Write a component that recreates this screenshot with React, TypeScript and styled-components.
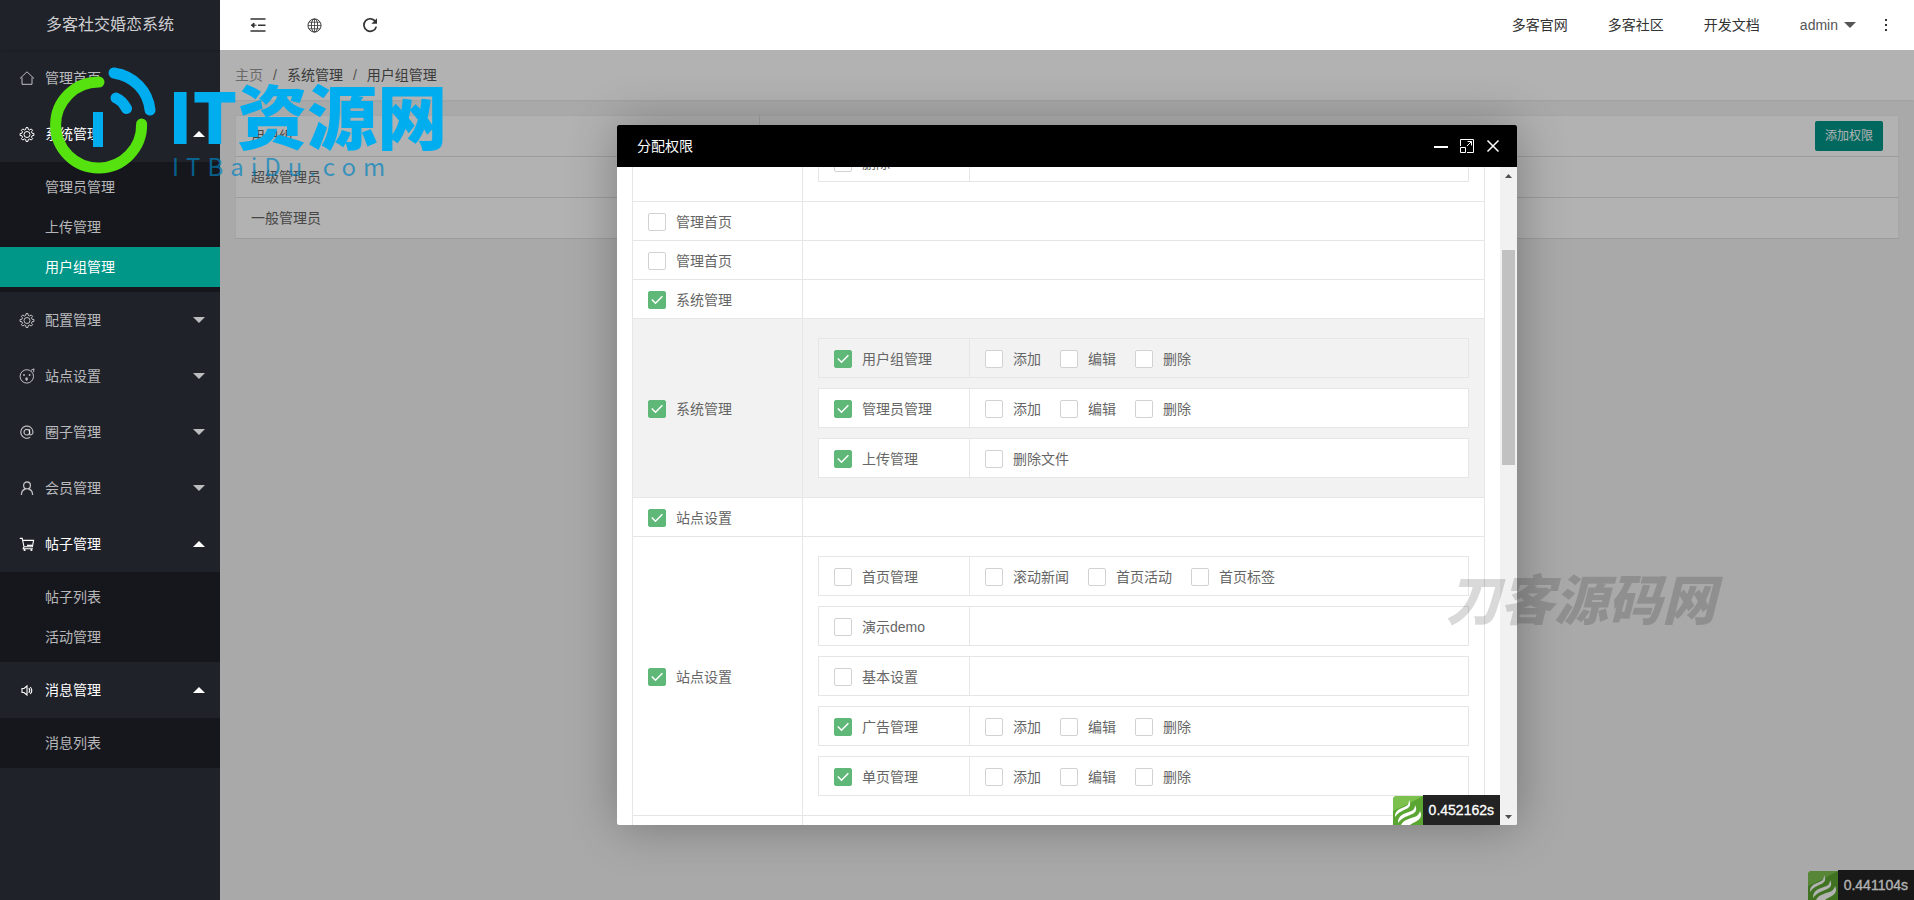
import React from "react";
import styled, { createGlobalStyle } from "styled-components";

const GlobalStyle = createGlobalStyle`
  * { box-sizing: border-box; }
  body {
    margin: 0;
    font: 14px/24px "Liberation Sans", "Noto Sans CJK SC", sans-serif;
    color: #333;
  }
  button, input { font: inherit; }
  ul, ol, nav { margin: 0; padding: 0; list-style: none; }
  a { color: inherit; text-decoration: none; }
`;

/* ---------- shell ---------- */

const Shell = styled.div`
  position: relative;
  display: flex;
  min-height: 100vh;
  overflow: hidden;
`;

const Sidebar = styled.aside`
  flex: 0 0 220px;
  background: #20222a;
  color: rgba(255, 255, 255, 0.7);
`;

const Brand = styled.h1`
  margin: 0;
  height: 50px;
  font-size: 16px;
  font-weight: 400;
  line-height: 50px;
  text-align: center;
  color: rgba(255, 255, 255, 0.8);
  box-shadow: 0 1px 2px rgba(0, 0, 0, 0.15);
`;

const MenuButton = styled.button<{ $open?: boolean }>`
  display: flex;
  align-items: center;
  gap: 10px;
  width: 100%;
  height: 56px;
  padding: 0 15px 0 19px;
  border: 0;
  background: none;
  text-align: left;
  color: ${(p) => (p.$open ? "#fff" : "rgba(255, 255, 255, 0.7)")};
`;

const MenuText = styled.span`
  flex: 1;
`;

const SubMenu = styled.ul`
  && { padding: 5px 0; }
  background: rgba(0, 0, 0, 0.3);
`;

const SubLink = styled.a<{ $active?: boolean }>`
  display: block;
  padding-left: 45px;
  line-height: 40px;
  background: ${(p) => (p.$active ? "#009688" : "none")};
  color: ${(p) => (p.$active ? "#fff" : "inherit")};
`;

const Caret = styled.i<{ $up?: boolean }>`
  width: 0;
  height: 0;
  border: 6px solid transparent;
  ${(p) =>
    p.$up
      ? "border-top-width: 0; border-bottom-color: currentColor;"
      : "border-bottom-width: 0; border-top-color: currentColor;"}
`;

const Main = styled.div`
  flex: 1;
  min-width: 0;
  display: flex;
  flex-direction: column;
`;

const Header = styled.header`
  display: flex;
  justify-content: space-between;
  align-items: center;
  height: 50px;
  padding-left: 10px;
  background: #fff;
`;

const Tools = styled.div`
  display: flex;
`;

const ToolButton = styled.button`
  display: flex;
  justify-content: center;
  align-items: center;
  width: 56px;
  height: 50px;
  padding: 0;
  border: 0;
  background: none;
  color: #333;
`;

const TopNav = styled.nav`
  display: flex;
  align-items: center;
`;

const TopLink = styled.a`
  padding: 0 20px;
`;

const UserLink = styled.a`
  display: flex;
  align-items: center;
  gap: 6px;
  padding: 0 2px 0 20px;
  color: #555;
`;

/* ---------- page behind the dialog ---------- */

const Frame = styled.main`
  position: relative;
  flex: 1;
  background: #f2f2f2;
`;

const Crumbs = styled.ol`
  display: flex;
  align-items: center;
  height: 50px;
  && { padding: 0 15px; }
  background: #fff;
  color: #666;
  box-shadow: 0 1px 2px rgba(0, 0, 0, 0.05);
`;

const Crumb = styled.li<{ $muted?: boolean }>`
  color: ${(p) => (p.$muted ? "#999" : "#555")};
  &:not(:first-child)::before {
    content: "/";
    padding: 0 10px;
    color: #777;
  }
`;

const GroupTable = styled.table`
  width: calc(100% - 30px);
  margin: 15px;
  border-collapse: collapse;
  background: #fff;
  border: 1px solid #eee;
  color: #666;
  tr { height: 41px; border-bottom: 1px solid #e0e0e0; }
  th, td { padding: 0 15px; text-align: left; font-weight: 400; }
  th:first-child, td:first-child { width: 524px; border-right: 1px solid #e6e6e6; }
  th:last-child { text-align: right; }
`;

const AddButton = styled.button`
  height: 30px;
  padding: 0 10px;
  border: 0;
  border-radius: 2px;
  background: #009688;
  color: #fff;
  font-size: 12px;
  line-height: 30px;
  vertical-align: middle;
`;

const Timer = styled.div`
  position: absolute;
  right: 0;
  bottom: 0;
  display: flex;
  align-items: flex-end;
  height: 30px;
`;

const TimerText = styled.span`
  padding: 0 6px;
  background: #232323;
  color: #fff;
  line-height: 30px;
  -webkit-text-stroke: 0.3px #fff;
`;

/* ---------- dialog ---------- */

const Shade = styled.div`
  position: absolute;
  inset: 0;
  display: flex;
  justify-content: center;
  align-items: center;
  background: rgba(0, 0, 0, 0.3);
`;

const Dialog = styled.section`
  display: flex;
  flex-direction: column;
  width: 900px;
  height: 700px;
  max-width: 100%;
  max-height: 100%;
  border-radius: 2px;
  overflow: hidden;
  background: #fff;
  box-shadow: 1px 1px 50px rgba(0, 0, 0, 0.3);
`;

const DialogHead = styled.header`
  display: flex;
  justify-content: space-between;
  align-items: center;
  flex: 0 0 42px;
  padding: 0 16px 0 20px;
  background: #000;
  color: #fff;
`;

const DialogTitle = styled.h2`
  margin: 0;
  font-size: 14px;
  font-weight: 400;
`;

const WindowButtons = styled.div`
  display: flex;
  gap: 10px;
`;

const WindowButton = styled.button`
  display: flex;
  width: 16px;
  height: 16px;
  padding: 0;
  border: 0;
  background: none;
  color: #fff;
`;

const DialogBody = styled.div`
  flex: 1;
  min-height: 0;
  display: flex;
`;

const Viewport = styled.div`
  position: relative;
  flex: 1;
  display: flex;
  flex-direction: column;
  padding: 0 15px;
  overflow: hidden;
`;

/* The list is scrolled, so its first visible group starts above the edge. */
const PermTable = styled.table`
  width: 100%;
  margin-top: -45px;
  table-layout: fixed;
  border-collapse: collapse;
  color: #666;
`;

const PermRow = styled.tr<{ $hover?: boolean }>`
  background: ${(p) => (p.$hover ? "#f2f2f2" : "#fff")};
  height: 39px;
`;

const PermCell = styled.td<{ $name?: boolean }>`
  width: ${(p) => (p.$name ? "170px" : "auto")};
  padding: ${(p) => (p.$name ? "2px 15px 0" : "0 15px")};
  border: 1px solid #e6e6e6;
`;

const InnerList = styled.div`
  display: flex;
  flex-direction: column;
  gap: 10px;
  padding: 19px 0;
`;

const InnerTable = styled.table<{ $hover?: boolean }>`
  width: 100%;
  table-layout: fixed;
  border-collapse: separate;
  border-spacing: 0;
  border: 1px solid #e6e6e6;
  background: ${(p) => (p.$hover ? "#f2f2f2" : "#fff")};
  td { height: 38px; padding: 2px 15px 0; }
  td:first-child { width: 151px; border-right: 1px solid #e6e6e6; }
`;

const CheckGroup = styled.div`
  display: flex;
  gap: 19px;
`;

const CheckLabel = styled.label`
  display: flex;
  align-items: center;
  gap: 10px;
`;

const CheckBox = styled.span`
  display: grid;
  place-items: center;
  > * { grid-area: 1 / 1; }
`;

const CheckInput = styled.input`
  appearance: none;
  width: 18px;
  height: 18px;
  margin: 0;
  border: 1px solid #d2d2d2;
  border-radius: 2px;
  background: #fff;
  &:checked { border-color: #5fb878; background: #5fb878; }
  & + svg { visibility: hidden; pointer-events: none; }
  &:checked + svg { visibility: visible; }
`;

const ScrollBar = styled.div`
  display: flex;
  flex-direction: column;
  align-items: center;
  flex: 0 0 17px;
  background: #f1f1f1;
`;

const ScrollArrow = styled.span`
  display: flex;
  justify-content: center;
  align-items: center;
  height: 17px;
`;

const ScrollTrack = styled.div`
  flex: 1;
  width: 13px;
  padding-top: 66px;
`;

const ScrollThumb = styled.div`
  height: 215px;
  background: #c1c1c1;
`;

/* ---------- watermarks ---------- */

const SiteMark = styled.div`
  position: absolute;
  left: 50px;
  top: 65px;
  display: flex;
  gap: 8px;
  pointer-events: none;
`;

const SiteMarkText = styled.div`
  display: flex;
  flex-direction: column;
  font-family: "Noto Sans CJK SC", sans-serif;
  white-space: nowrap;
`;

const SiteName = styled.span`
  margin-top: 14px;
  color: #00adef;
  font-size: 70px;
  font-weight: 900;
  line-height: 70px;
`;

const SiteDomain = styled.span`
  padding-left: 4px;
  color: rgba(0, 130, 190, 0.7);
  font-size: 24px;
  letter-spacing: 7px;
  line-height: 34px;
`;

const SourceMark = styled.div`
  position: absolute;
  right: 198px;
  top: 569px;
  color: rgba(0, 0, 0, 0.15);
  font: italic 900 54px/56px "Noto Sans CJK SC", sans-serif;
  pointer-events: none;
`;

/* ---------- icons ---------- */

const Icon = ({ children, size = 16 }: { children: React.ReactNode; size?: number }) => (
  <svg width={size} height={size} viewBox="0 0 16 16" fill="none" stroke="currentColor" strokeWidth="1" aria-hidden="true">
    {children}
  </svg>
);

/* Eight-tooth gear outline: four points per tooth, two on each radius. */
const gearPoints = Array.from({ length: 32 }, (_, i) => {
  const tooth = Math.floor(i / 4);
  const step = [-14, -8, 8, 14][i % 4];
  const radius = i % 4 === 1 || i % 4 === 2 ? 7 : 5.2;
  const angle = ((tooth * 45 + step) * Math.PI) / 180;
  return `${(8 + radius * Math.cos(angle)).toFixed(2)},${(8.5 + radius * Math.sin(angle)).toFixed(2)}`;
}).join(" ");

const HomeIcon = () => (
  <Icon><path d="M1 8.500 8 1.800l7 6.700M3 7.500v6.800h10V7.500" /></Icon>
);
const GearIcon = () => (
  <Icon>
    <polygon points={gearPoints} strokeLinejoin="round" />
    <circle cx="8" cy="8.500" r="3" />
  </Icon>
);
const FaceIcon = () => (
  <Icon>
    <circle cx="7.800" cy="8.400" r="6.700" />
    <path d="M12 2.400 15 .8l-.4 3.400" />
    <circle cx="5" cy="7" r=".9" fill="currentColor" stroke="none" />
    <circle cx="10.600" cy="7" r=".9" fill="currentColor" stroke="none" />
    <ellipse cx="7.600" cy="11" rx="1.300" ry="1.800" fill="currentColor" stroke="none" />
  </Icon>
);
const AtIcon = () => (
  <Icon>
    <circle cx="7.800" cy="8.200" r="2.800" strokeWidth="1.200" />
    <path d="M10.600 5.200v4.400c0 2 3.400 1.600 3.400-1.600a6.100 6.100 0 1 0-2.800 5.300" strokeWidth="1.200" />
  </Icon>
);
const UserIcon = () => (
  <Icon>
    <circle cx="8" cy="5.400" r="3.400" strokeWidth="1.300" />
    <path d="M2.400 15c0-3.400 1.600-5.400 4-6M13.600 15c0-3.400-1.600-5.400-4-6" strokeWidth="1.300" />
  </Icon>
);
const CartIcon = () => (
  <Icon>
    <path d="M.8 2.400h2.400L5 10.800h8.400l1.200-6.400H3.700M5 10.800l-.8 2h9.600" strokeWidth="1.100" />
    <circle cx="5.600" cy="14" r="1.100" fill="currentColor" stroke="none" />
    <circle cx="12.400" cy="14" r="1.100" fill="currentColor" stroke="none" />
    <path d="M8 9.400h5" strokeWidth="1.400" />
  </Icon>
);
const SoundIcon = () => (
  <Icon>
    <path d="M3 6.500v4h2l3 2.500V4L5 6.500z" strokeWidth="1.100" />
    <path d="M9.800 6.200c1 1.200 1 3.400 0 4.600M11.300 5c1.700 2 1.700 5 0 7" strokeWidth="1.100" />
  </Icon>
);
const ShrinkIcon = () => (
  <Icon>
    <path d="M.5 2h15M8 8.200h7.500M.5 14h15" strokeWidth="1.400" />
    <path d="M1.200 8.200 4 6v4.400zM4 8.200h2.500" fill="currentColor" strokeWidth="1" />
  </Icon>
);
const GlobeIcon = () => (
  <Icon size={15}>
    <circle cx="8" cy="8" r="7" />
    <ellipse cx="8" cy="8" rx="3.400" ry="7" />
    <path d="M1 8h14M8 1v14M2.200 4.500h11.600M2.200 11.500h11.600" strokeWidth=".8" />
  </Icon>
);
const RefreshIcon = () => (
  <Icon>
    <path d="M13.600 4.800A6.300 6.300 0 1 0 14.300 9.600" strokeWidth="1.700" />
    <path d="M15 1.200v5.600H9.400z" fill="currentColor" stroke="none" />
  </Icon>
);
const MoreIcon = () => (
  <Icon>
    <path d="M7 2h2v2H7zM7 7h2v2H7zM7 12h2v2H7z" fill="currentColor" stroke="none" />
  </Icon>
);
const MinIcon = () => <Icon><path d="M1 9h14" strokeWidth="2" /></Icon>;
const MaxIcon = () => (
  <Icon>
    <path d="M1.500 8V1.500h13v13H8M1.500 9.500h5v5h-5zM8 8l4.500-4.500M8.500 3.500h4v4" />
  </Icon>
);
const CloseIcon = () => <Icon><path d="m2.500 2.500 11 11m0-11-11 11" strokeWidth="1.500" /></Icon>;

const FlameIcon = () => (
  <svg width="30" height="29" viewBox="0 0 30 29" aria-hidden="true">
    <path d="M0 29V4a4 4 0 0 1 4-4h26v29z" fill="#5ba532" />
    <path d="M0 15V4a4 4 0 0 1 4-4h26L13 9z" fill="#7cc04e" />
    <g fill="#fff">
      <path d="M16 4c3 6 0 8-5 10-4 2-6 3-9 7 0-5 2-7 7-9s7-3 7-8z" />
      <path d="M22 9c3 6 0 8-5 10-5 2-8 3-12 8 0-6 3-8 8-10 6-2 9-3 9-8z" />
      <path d="M27 15c3 6-1 9-5 11-2 1-4 2-5 3H8c2-4 5-5 10-7 5-1 8-3 9-7z" />
    </g>
  </svg>
);

const SiteLogo = () => (
  <svg width="110" height="112" viewBox="50 65 110 112" fill="none" strokeWidth="11" aria-hidden="true">
    <path d="M99 82a43 43 0 1 0 42.600 42" stroke="#55e20f" strokeLinecap="round" />
    <path d="M114 73c20 3 34 18 36 37" stroke="#00adef" strokeLinecap="round" />
    <path d="M116 98c5 2 8 6 10.500 10.500" stroke="#00adef" strokeLinecap="round" />
    <path d="M98 112v35" stroke="#00adef" strokeWidth="10" />
  </svg>
);

/* ---------- data ---------- */

type MenuItem = {
  title: string;
  icon: React.ReactNode;
  leaf?: boolean;
  children?: string[];
};

const menu: MenuItem[] = [
  { title: "管理首页", icon: <HomeIcon />, leaf: true },
  { title: "系统管理", icon: <GearIcon />, children: ["管理员管理", "上传管理", "用户组管理"] },
  { title: "配置管理", icon: <GearIcon /> },
  { title: "站点设置", icon: <FaceIcon /> },
  { title: "圈子管理", icon: <AtIcon /> },
  { title: "会员管理", icon: <UserIcon /> },
  { title: "帖子管理", icon: <CartIcon />, children: ["帖子列表", "活动管理"] },
  { title: "消息管理", icon: <SoundIcon />, children: ["消息列表"] },
];

type Node = { title: string; on?: boolean; actions?: string[] };
type Group = { title?: string; on?: boolean; hover?: boolean; nodes?: Node[] };

const crud = ["添加", "编辑", "删除"];

const groups: Group[] = [
  { nodes: [{ title: "删除" }] },
  { title: "管理首页" },
  { title: "管理首页" },
  { title: "系统管理", on: true },
  {
    title: "系统管理",
    on: true,
    hover: true,
    nodes: [
      { title: "用户组管理", on: true, actions: crud },
      { title: "管理员管理", on: true, actions: crud },
      { title: "上传管理", on: true, actions: ["删除文件"] },
    ],
  },
  { title: "站点设置", on: true },
  {
    title: "站点设置",
    on: true,
    nodes: [
      { title: "首页管理", actions: ["滚动新闻", "首页活动", "首页标签"] },
      { title: "演示demo" },
      { title: "基本设置" },
      { title: "广告管理", on: true, actions: crud },
      { title: "单页管理", on: true, actions: crud },
    ],
  },
  {},
];

/* ---------- parts ---------- */

const Check = ({ label, on }: { label: string; on?: boolean }) => (
  <CheckLabel>
    <CheckBox>
      <CheckInput type="checkbox" defaultChecked={on} />
      <svg width="12" height="10" viewBox="0 0 12 10" fill="none" stroke="#fff" strokeWidth="1.500" aria-hidden="true">
        <path d="m.8 4.500 3.700 3.700L11.400 1.200" />
      </svg>
    </CheckBox>
    {label}
  </CheckLabel>
);

const LoadTimer = ({ value }: { value: string }) => (
  <Timer>
    <FlameIcon />
    <TimerText>{value}</TimerText>
  </Timer>
);

const PermissionDialog = () => (
  <Dialog role="dialog" aria-labelledby="dialog-title">
    <DialogHead>
      <DialogTitle id="dialog-title">分配权限</DialogTitle>
      <WindowButtons>
        <WindowButton aria-label="最小化"><MinIcon /></WindowButton>
        <WindowButton aria-label="最大化"><MaxIcon /></WindowButton>
        <WindowButton aria-label="关闭"><CloseIcon /></WindowButton>
      </WindowButtons>
    </DialogHead>
    <DialogBody>
      <Viewport>
        <PermTable>
          <tbody>
            {groups.map((group, g) => (
              <PermRow key={g} $hover={group.hover}>
                <PermCell $name>{group.title && <Check label={group.title} on={group.on} />}</PermCell>
                <PermCell>
                  {group.nodes && (
                    <InnerList>
                      {group.nodes.map((node, n) => (
                        <InnerTable key={node.title} $hover={group.hover && n === 0}>
                          <tbody>
                            <tr>
                              <td><Check label={node.title} on={node.on} /></td>
                              <td>
                                <CheckGroup>
                                  {node.actions?.map((action) => <Check key={action} label={action} />)}
                                </CheckGroup>
                              </td>
                            </tr>
                          </tbody>
                        </InnerTable>
                      ))}
                    </InnerList>
                  )}
                </PermCell>
              </PermRow>
            ))}
          </tbody>
        </PermTable>
        <LoadTimer value="0.452162s" />
      </Viewport>
      <ScrollBar>
        <ScrollArrow>
          <svg width="7" height="4" viewBox="0 0 7 4" aria-hidden="true"><path d="M0 4h7L3.500 0z" fill="#505050" /></svg>
        </ScrollArrow>
        <ScrollTrack><ScrollThumb /></ScrollTrack>
        <ScrollArrow>
          <svg width="7" height="4" viewBox="0 0 7 4" aria-hidden="true"><path d="M0 0h7L3.500 4z" fill="#505050" /></svg>
        </ScrollArrow>
      </ScrollBar>
    </DialogBody>
  </Dialog>
);

export default function App() {
  return (
    <Shell>
      <GlobalStyle />
      <Sidebar>
        <Brand>多客社交婚恋系统</Brand>
        <ul>
          {menu.map((item) => (
            <li key={item.title}>
              <MenuButton $open={!!item.children}>
                {item.icon}
                <MenuText>{item.title}</MenuText>
                {!item.leaf && <Caret $up={!!item.children} />}
              </MenuButton>
              {item.children && (
                <SubMenu>
                  {item.children.map((child) => (
                    <li key={child}>
                      <SubLink href="#" $active={child === "用户组管理"}>{child}</SubLink>
                    </li>
                  ))}
                </SubMenu>
              )}
            </li>
          ))}
        </ul>
      </Sidebar>
      <Main>
        <Header>
          <Tools>
            <ToolButton aria-label="侧边伸缩"><ShrinkIcon /></ToolButton>
            <ToolButton aria-label="前台"><GlobeIcon /></ToolButton>
            <ToolButton aria-label="刷新"><RefreshIcon /></ToolButton>
          </Tools>
          <TopNav>
            <TopLink href="#">多客官网</TopLink>
            <TopLink href="#">多客社区</TopLink>
            <TopLink href="#">开发文档</TopLink>
            <UserLink href="#">admin<Caret /></UserLink>
            <ToolButton aria-label="更多"><MoreIcon /></ToolButton>
          </TopNav>
        </Header>
        <Frame>
          <Crumbs>
            <Crumb $muted><a href="#">主页</a></Crumb>
            <Crumb><a href="#">系统管理</a></Crumb>
            <Crumb>用户组管理</Crumb>
          </Crumbs>
          <GroupTable>
            <thead>
              <tr><th>用户组</th><th><AddButton>添加权限</AddButton></th></tr>
            </thead>
            <tbody>
              <tr><td>超级管理员</td><td /></tr>
              <tr><td>一般管理员</td><td /></tr>
            </tbody>
          </GroupTable>
          <LoadTimer value="0.441104s" />
          <Shade><PermissionDialog /></Shade>
        </Frame>
      </Main>
      <SiteMark>
        <SiteLogo />
        <SiteMarkText>
          <SiteName>IT资源网</SiteName>
          <SiteDomain>ITBaiDu.com</SiteDomain>
        </SiteMarkText>
      </SiteMark>
      <SourceMark>刀客源码网</SourceMark>
    </Shell>
  );
}
